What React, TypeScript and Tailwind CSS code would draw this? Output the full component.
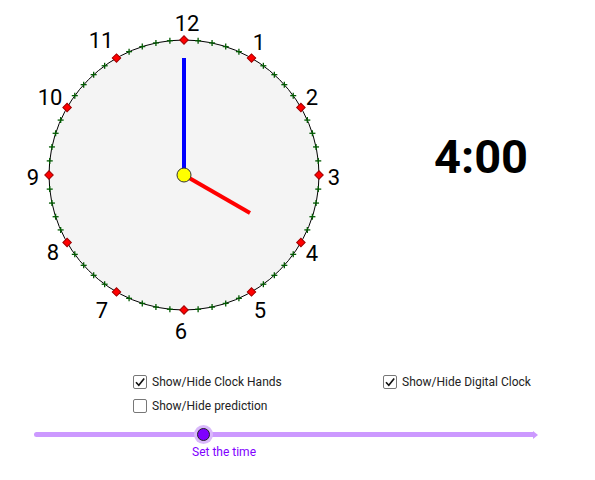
import React from 'react';

const CX = 184;
const CY = 175;
const R = 135;

const numbers: { n: string; x: number; y: number }[] = [
  { n: '12', x: 187, y: 23 },
  { n: '1', x: 259, y: 42 },
  { n: '2', x: 312, y: 97 },
  { n: '3', x: 334, y: 177 },
  { n: '4', x: 312, y: 253 },
  { n: '5', x: 260, y: 310 },
  { n: '6', x: 181, y: 331 },
  { n: '7', x: 102, y: 310 },
  { n: '8', x: 53, y: 252 },
  { n: '9', x: 33, y: 177 },
  { n: '10', x: 50, y: 97 },
  { n: '11', x: 101, y: 40 },
];

const ClockFace: React.FC = () => {
  const marks = Array.from({ length: 60 }, (_, i) => {
    const a = (i * Math.PI) / 30;
    return { i, x: CX + R * Math.sin(a), y: CY - R * Math.cos(a) };
  });

  return (
    <svg width={360} height={350} className="shrink-0">
      <circle cx={CX} cy={CY} r={R} fill="#f4f4f4" stroke="#000" strokeWidth={1} />
      {marks.map((m) =>
        m.i % 5 === 0 ? (
          <rect
            key={m.i}
            x={m.x - 3}
            y={m.y - 3}
            width={6}
            height={6}
            fill="#ff0000"
            stroke="#a00000"
            strokeWidth={1}
            transform={`rotate(45 ${m.x} ${m.y})`}
          />
        ) : (
          <g key={m.i} stroke="#005a00" strokeWidth={1.3}>
            <line x1={m.x - 3} y1={m.y} x2={m.x + 3} y2={m.y} />
            <line x1={m.x} y1={m.y - 3} x2={m.x} y2={m.y + 3} />
          </g>
        )
      )}
      {numbers.map((t) => (
        <text
          key={t.n}
          x={t.x}
          y={t.y + 7.8}
          textAnchor="middle"
          fontSize={22}
          fontFamily="Roboto, 'Liberation Sans', sans-serif"
          fill="#000"
        >
          {t.n}
        </text>
      ))}
      <line x1={CX} y1={CY} x2={CX} y2={58} stroke="#0000ff" strokeWidth={4} />
      <line x1={CX} y1={CY} x2={250} y2={213} stroke="#ff0000" strokeWidth={4} />
      <circle cx={CX} cy={CY} r={7} fill="#ffff00" stroke="#333" strokeWidth={1} />
    </svg>
  );
};

const Check: React.FC<{ checked?: boolean; label: string }> = ({ checked, label }) => (
  <label className="flex items-center gap-[5px]">
    <span className="flex h-[14px] w-[14px] items-center justify-center rounded-[2px] border border-[#777] bg-white">
      {checked && (
        <svg width={12} height={12} viewBox="0 0 12 12">
          <path d="M2 6.2 L4.8 9.2 L10.2 2.4" fill="none" stroke="#111" strokeWidth={1.6} />
        </svg>
      )}
    </span>
    <span className="text-[12px] leading-none text-[#222]">{label}</span>
  </label>
);

export default function App() {
  return (
    <div className="relative h-[480px] w-[595px] overflow-hidden bg-white font-['Roboto','Liberation_Sans',sans-serif]">
      <div className="flex h-[350px]">
        <ClockFace />
        <div className="flex-1 pl-[7px] pt-[133px] text-center">
          <span className="text-[47px] font-bold leading-none text-black">4:00</span>
        </div>
      </div>

      <div className="flex pl-[133px] pt-[25px]">
        <div className="flex w-[250px] flex-col gap-[10px]">
          <Check checked label="Show/Hide Clock Hands" />
          <Check label="Show/Hide prediction" />
        </div>
        <div>
          <Check checked label="Show/Hide Digital Clock" />
        </div>
      </div>

      <div className="pl-[34px] pt-[19px]">
        <div className="relative flex h-[5px] w-[504px] items-center">
          <div className="h-[4.5px] flex-1 rounded-l-full bg-[#cc99ff]" />
          <div className="h-0 w-0 border-y-[4px] border-l-[5px] border-y-transparent border-l-[#cc99ff]" />
          <div className="absolute left-[160px] top-[-7px] flex h-[19px] w-[19px] items-center justify-center rounded-full bg-[#d9b8fb]">
            <div className="h-[13px] w-[13px] rounded-full border border-[#222] bg-[#7f00ff]" />
          </div>
        </div>
        <div className="pl-[158px] pt-[9px] text-[12px] leading-none text-[#7f00ff]">Set the time</div>
      </div>
    </div>
  );
}
